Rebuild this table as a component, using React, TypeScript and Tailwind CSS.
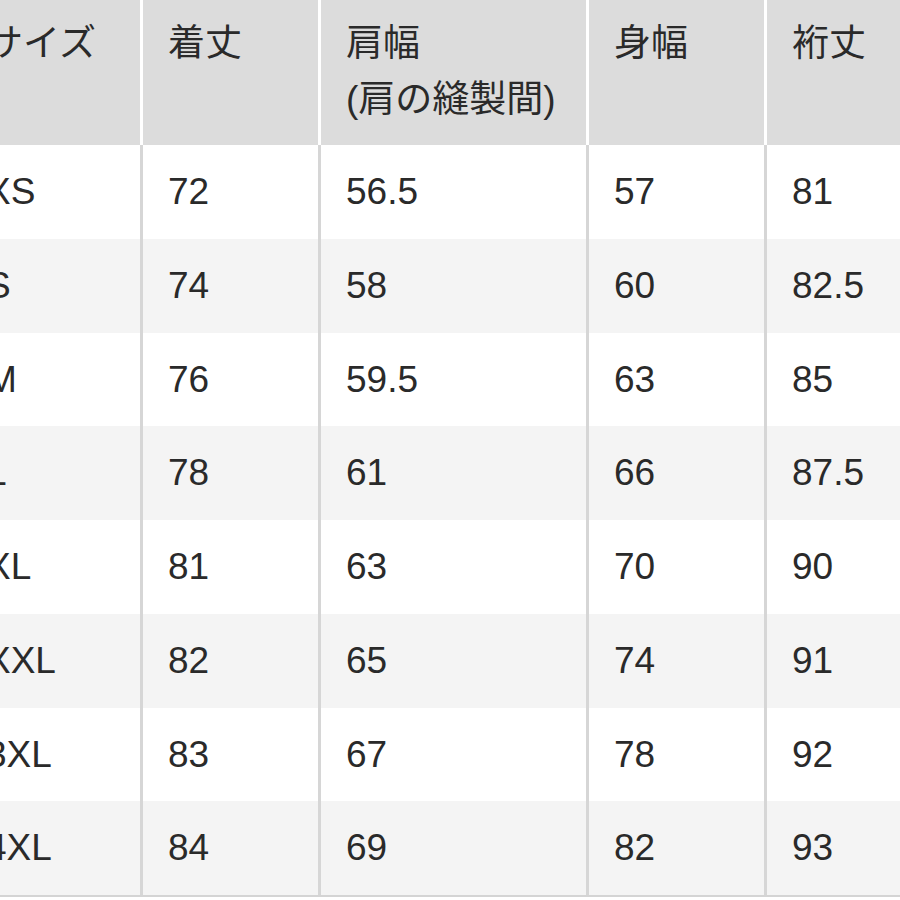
const headers = ["サイズ", "着丈", "肩幅\n(肩の縫製間)", "身幅", "裄丈"];

const rows = [
  ["XS", "72", "56.5", "57", "81"],
  ["S", "74", "58", "60", "82.5"],
  ["M", "76", "59.5", "63", "85"],
  ["L", "78", "61", "66", "87.5"],
  ["XL", "81", "63", "70", "90"],
  ["XXL", "82", "65", "74", "91"],
  ["3XL", "83", "67", "78", "92"],
  ["4XL", "84", "69", "82", "93"],
];

export default function App() {
  return (
    <div
      className="w-[900px] h-[900px] overflow-hidden bg-white text-[#2a2a2a]"
      style={{ fontFamily: '"Liberation Sans", "Noto Sans CJK JP", sans-serif' }}
    >
      <div className="ml-[-39px] w-[939px] grid grid-cols-[182px_178px_268px_178px_1fr] text-[37px] border-b-[2px] border-[#d4d4d4]">
        {headers.map((h, i) => (
          <div
            key={h}
            className={`h-[145px] bg-[#dcdcdc] pl-[25px] pt-[16px] leading-[56px] whitespace-pre ${
              i < 4 ? "border-r-[3px] border-white" : ""
            }`}
          >
            {h}
          </div>
        ))}
        {rows.map((row, r) =>
          row.map((cell, i) => (
            <div
              key={`${r}-${i}`}
              className={`h-[93.75px] flex items-center pl-[25px] ${
                r % 2 === 1 ? "bg-[#f4f4f4]" : "bg-white"
              } ${i < 4 ? "border-r-[3px] border-[#d6d6d6]" : ""}`}
            >
              {cell}
            </div>
          ))
        )}
      </div>
    </div>
  );
}
